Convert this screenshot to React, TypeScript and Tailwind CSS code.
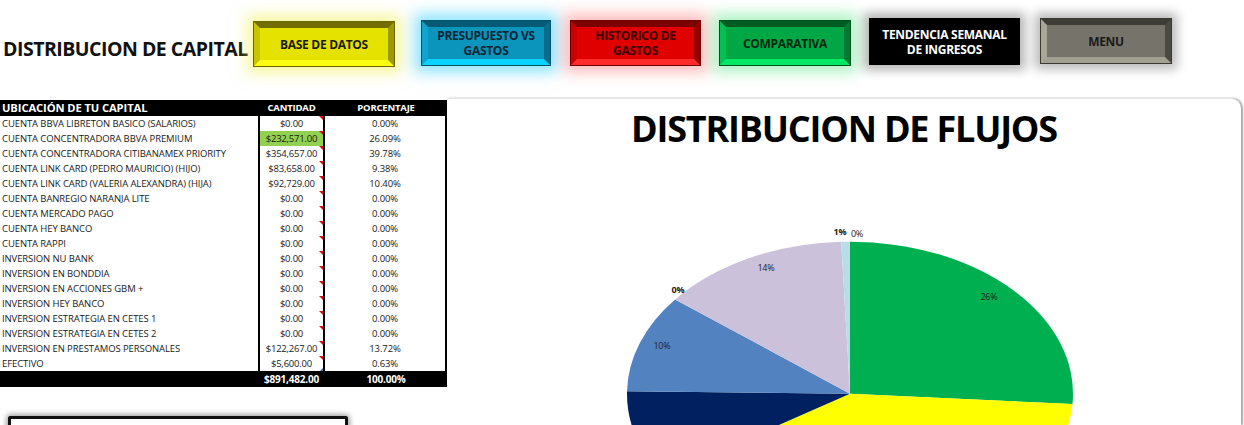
import React from "react";

const rows: { label: string; amount: string; pct: string; green?: boolean }[] = [
  { label: "CUENTA BBVA LIBRETON BASICO (SALARIOS)", amount: "$0.00", pct: "0.00%" },
  { label: "CUENTA CONCENTRADORA BBVA PREMIUM", amount: "$232,571.00", pct: "26.09%", green: true },
  { label: "CUENTA CONCENTRADORA CITIBANAMEX PRIORITY", amount: "$354,657.00", pct: "39.78%" },
  { label: "CUENTA LINK CARD (PEDRO MAURICIO) (HIJO)", amount: "$83,658.00", pct: "9.38%" },
  { label: "CUENTA LINK CARD (VALERIA ALEXANDRA) (HIJA)", amount: "$92,729.00", pct: "10.40%" },
  { label: "CUENTA BANREGIO NARANJA LITE", amount: "$0.00", pct: "0.00%" },
  { label: "CUENTA MERCADO PAGO", amount: "$0.00", pct: "0.00%" },
  { label: "CUENTA HEY BANCO", amount: "$0.00", pct: "0.00%" },
  { label: "CUENTA RAPPI", amount: "$0.00", pct: "0.00%" },
  { label: "INVERSION NU BANK", amount: "$0.00", pct: "0.00%" },
  { label: "INVERSION EN BONDDIA", amount: "$0.00", pct: "0.00%" },
  { label: "INVERSION EN ACCIONES GBM +", amount: "$0.00", pct: "0.00%" },
  { label: "INVERSION HEY BANCO", amount: "$0.00", pct: "0.00%" },
  { label: "INVERSION ESTRATEGIA EN CETES 1", amount: "$0.00", pct: "0.00%" },
  { label: "INVERSION ESTRATEGIA EN CETES 2", amount: "$0.00", pct: "0.00%" },
  { label: "INVERSION EN PRESTAMOS PERSONALES", amount: "$122,267.00", pct: "13.72%" },
  { label: "EFECTIVO", amount: "$5,600.00", pct: "0.63%" },
];

const font = { fontFamily: '"Open Sans", "Noto Sans", sans-serif' };

function BevelButton({
  lines,
  outer,
  face,
  top,
  left,
  bottom,
  right,
  glow,
  text,
  w,
  h,
  mt,
}: {
  lines: string[];
  outer: string;
  face: string;
  top: string;
  left: string;
  bottom: string;
  right: string;
  glow: string;
  text: string;
  w: string;
  h: string;
  mt: string;
}) {
  return (
    <div className={`${w} ${h} ${mt} ${outer} ${glow} shrink-0 border`}>
      <div
        className={`h-full w-full border-[6px] ${top} ${left} ${bottom} ${right} ${face} flex flex-col items-center justify-center`}
      >
        {lines.map((l) => (
          <div key={l} className={`text-[12px] font-bold leading-[15px] tracking-[-0.3px] ${text}`}>
            {l}
          </div>
        ))}
      </div>
    </div>
  );
}

function polar(cx: number, cy: number, rx: number, ry: number, a: number) {
  const r = (a * Math.PI) / 180;
  return [cx + rx * Math.sin(r), cy - ry * Math.cos(r)];
}

function Pie() {
  const cx = 403;
  const cy = 232.7;
  const rx = 223;
  const ry = 152;
  const data = [
    { v: 0, c: "#4f81bd" },
    { v: 26.09, c: "#00b050" },
    { v: 39.78, c: "#ffff00" },
    { v: 9.38, c: "#002060" },
    { v: 10.4, c: "#5282c0" },
    { v: 13.72, c: "#ccc1da" },
    { v: 0.63, c: "#b7dee8" },
  ];
  let acc = 0;
  const paths = data.map((d, i) => {
    const a0 = (acc / 100) * 360;
    acc += d.v;
    const a1 = (acc / 100) * 360;
    if (d.v === 0) return null;
    const [x0, y0] = polar(cx, cy, rx, ry, a0);
    const [x1, y1] = polar(cx, cy, rx, ry, a1);
    const large = a1 - a0 > 180 ? 1 : 0;
    return (
      <path
        key={i}
        d={`M ${cx} ${cy} L ${x0} ${y0} A ${rx} ${ry} 0 ${large} 1 ${x1} ${y1} Z`}
        fill={d.c}
      />
    );
  });
  return (
    <svg width="794" height="265" viewBox="0 0 794 265" className="block">
      {paths}
      <g fontFamily="'Open Sans', 'Noto Sans', sans-serif" fontSize="9" fill="#222" letterSpacing="-0.2">
        <text x="542" y="139" textAnchor="middle">26%</text>
        <text x="319" y="110" textAnchor="middle">14%</text>
        <text x="215" y="188" textAnchor="middle">10%</text>
        <text x="231" y="132" textAnchor="middle" fontWeight="bold">0%</text>
        <text x="393" y="74" textAnchor="middle" fontWeight="bold">1%</text>
        <text x="410" y="76" textAnchor="middle">0%</text>
      </g>
    </svg>
  );
}

export default function App() {
  return (
    <div className="h-[425px] w-[1244px] overflow-hidden bg-white text-black" style={font}>
      {/* Header */}
      <div className="flex h-[98px] items-start">
        <div className="mt-[35px] w-[253px] shrink-0 whitespace-nowrap pl-[3px] text-[19.5px] font-bold leading-[28px] tracking-[-0.5px] text-[#111]">
          DISTRIBUCION DE CAPITAL
        </div>
        <BevelButton
          lines={["BASE DE DATOS"]}
          w="w-[142px]"
          h="h-[46px]"
          mt="mt-[21px]"
          outer="border-[#6a6600]"
          face="bg-[#e6e200]"
          top="border-t-[#716d00]"
          left="border-l-[#c8c400]"
          bottom="border-b-[#fcfc10]"
          right="border-r-[#9d9900]"
          glow="shadow-[0_0_14px_6px_rgba(240,240,60,0.5)]"
          text="text-[#1a1a00]"
        />
        <div className="w-[26px] shrink-0" />
        <BevelButton
          lines={["PRESUPUESTO VS", "GASTOS"]}
          w="w-[130px]"
          h="h-[46px]"
          mt="mt-[20px]"
          outer="border-[#04546c]"
          face="bg-[#0b95bd]"
          top="border-t-[#075a74]"
          left="border-l-[#0ea4cf]"
          bottom="border-b-[#0ad2ff]"
          right="border-r-[#0a6d8b]"
          glow="shadow-[0_0_14px_6px_rgba(20,200,255,0.5)]"
          text="text-[#0a2535]"
        />
        <div className="w-[19px] shrink-0" />
        <BevelButton
          lines={["HISTORICO DE", "GASTOS"]}
          w="w-[131px]"
          h="h-[46px]"
          mt="mt-[20px]"
          outer="border-[#700000]"
          face="bg-[#e00000]"
          top="border-t-[#7c0000]"
          left="border-l-[#c80000]"
          bottom="border-b-[#ff2a2a]"
          right="border-r-[#950000]"
          glow="shadow-[0_0_14px_6px_rgba(255,80,80,0.4)]"
          text="text-[#3a0000]"
        />
        <div className="w-[18px] shrink-0" />
        <BevelButton
          lines={["COMPARATIVA"]}
          w="w-[132px]"
          h="h-[46px]"
          mt="mt-[20px]"
          outer="border-[#005020]"
          face="bg-[#00a845]"
          top="border-t-[#005c22]"
          left="border-l-[#00c052]"
          bottom="border-b-[#00e864]"
          right="border-r-[#007a32]"
          glow="shadow-[0_0_14px_6px_rgba(40,220,100,0.4)]"
          text="text-[#002a10]"
        />
        <div className="w-[18px] shrink-0" />
        <div className="mt-[18px] flex h-[47px] w-[151px] shrink-0 flex-col items-center justify-center bg-black shadow-[0_0_10px_5px_rgba(0,0,0,0.3)]">
          <div className="text-[12px] font-bold leading-[15px] tracking-[-0.3px] text-white">TENDENCIA SEMANAL</div>
          <div className="text-[12px] font-bold leading-[15px] tracking-[-0.3px] text-white">DE INGRESOS</div>
        </div>
        <div className="w-[20px] shrink-0" />
        <BevelButton
          lines={["MENU"]}
          w="w-[132px]"
          h="h-[46px]"
          mt="mt-[18px]"
          outer="border-[#3a3a33]"
          face="bg-[#76736a]"
          top="border-t-[#3d3c35]"
          left="border-l-[#a8a599]"
          bottom="border-b-[#a29f93]"
          right="border-r-[#4a4942]"
          glow="shadow-[0_0_10px_5px_rgba(0,0,0,0.28)]"
          text="text-[#1a1a1a]"
        />
      </div>

      {/* Body */}
      <div className="flex items-start">
        <div className="w-[447px] shrink-0 pt-[2px]">
          {/* Header row */}
          <div className="grid h-[16px] grid-cols-[258px_67px_122px] bg-black font-bold leading-[16px] text-white">
            <div className="whitespace-nowrap pl-[2px] text-[11.2px] tracking-[-0.1px]">UBICACIÓN DE TU CAPITAL</div>
            <div className="text-center text-[9.5px] tracking-[-0.2px]">CANTIDAD</div>
            <div className="text-center text-[9.5px] tracking-[-0.2px]">PORCENTAJE</div>
          </div>
          {rows.map((r, i) => (
            <div
              key={r.label}
              className="grid h-[15px] grid-cols-[258px_67px_122px] text-[9.5px] leading-[15px] tracking-[-0.1px] text-[#1a1a1a]"
            >
              <div className="whitespace-nowrap pl-[2px]">{r.label}</div>
              <div
                className={`relative whitespace-nowrap border-x-2 border-black text-center tracking-[-0.2px] ${r.green ? "bg-[#92d050]" : "bg-white"}`}
              >
                {r.amount}
                <span className="absolute right-0 top-0 h-0 w-0 border-l-[4px] border-t-[4px] border-l-transparent border-t-[#d01010]" />
                {i === rows.length - 1 && (
                  <span className="absolute bottom-0 right-0 h-0 w-0 border-b-[3px] border-l-[3px] border-b-[#4060b0] border-l-transparent" />
                )}
              </div>
              <div className="border-r-2 border-black text-center">{r.pct}</div>
            </div>
          ))}
          <div className="grid h-[16px] grid-cols-[258px_67px_122px] bg-black text-[10px] font-bold leading-[16px] tracking-[-0.2px] text-white">
            <div />
            <div className="whitespace-nowrap text-center">$891,482.00</div>
            <div className="text-center">100.00%</div>
          </div>
          <div className="ml-[8px] mt-[29px] h-[30px] w-[340px] rounded-t-[3px] border-[3px] border-b-0 border-[#111] shadow-[0_0_5px_2px_rgba(0,0,0,0.35)]" />
        </div>

        {/* Chart panel */}
        <div className="mr-[3px] h-[327px] flex-1 overflow-hidden rounded-tr-[10px] border-t border-[#e6e6e6] bg-white shadow-[2px_0_2px_0_rgba(0,0,0,0.35)]">
          <div className="flex h-[62px] items-start justify-center pt-[8px]">
            <div className="text-[36px] font-bold leading-[44px] tracking-[-1.2px] text-black">
              DISTRIBUCION DE FLUJOS
            </div>
          </div>
          <Pie />
        </div>
      </div>
    </div>
  );
}
